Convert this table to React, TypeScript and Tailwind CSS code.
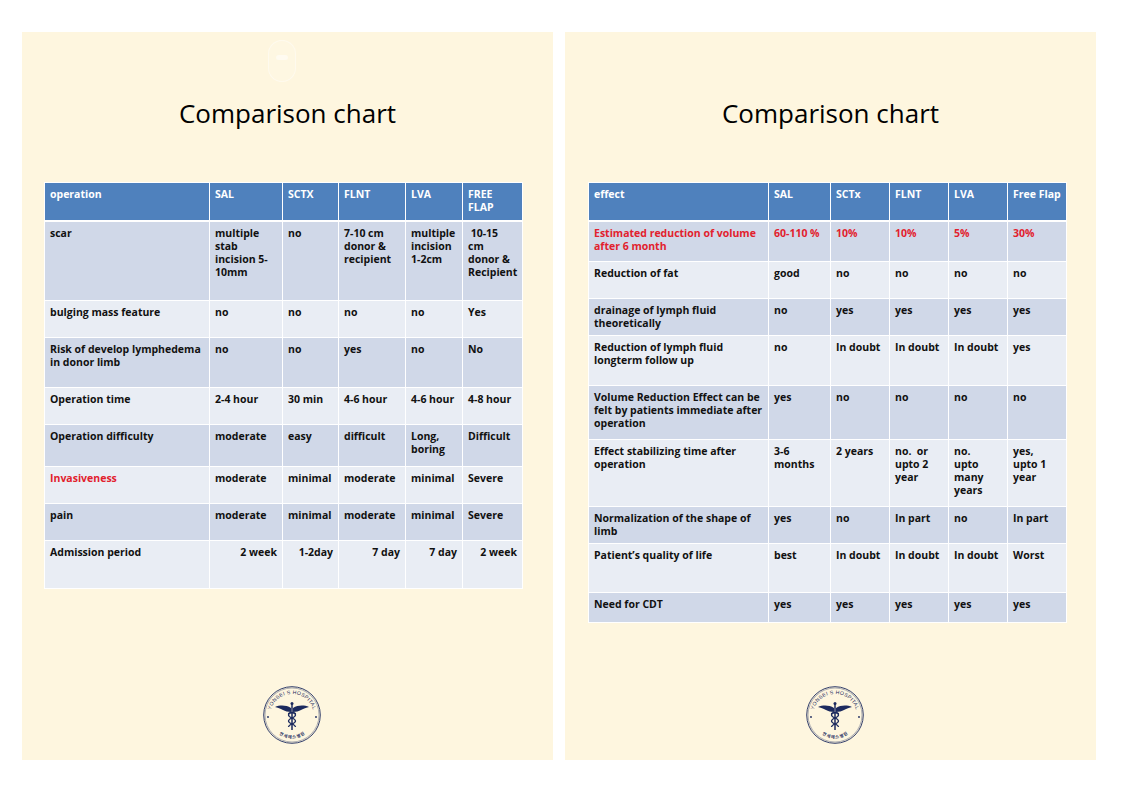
import React from "react";

type Cell = { t: string; red?: boolean; right?: boolean };
type Row = { h: number; cells: (string | Cell)[]; red?: boolean; rightVals?: boolean };

const FONT = { fontFamily: '"Open Sans", "Noto Sans CJK KR", sans-serif' };

const leftCols = [164, 72, 55, 66, 56, 59];
const rightCols = [179, 61, 58, 58, 58, 58];

const leftHeader = ["operation", "SAL", "SCTX", "FLNT", "LVA", "FREE\nFLAP"];
const leftRows: Row[] = [
  { h: 78, cells: ["scar", "multiple\nstab\nincision 5-\n10mm", "no", "7-10 cm\ndonor &\nrecipient", "multiple\nincision\n1-2cm", " 10-15\ncm\ndonor &\nRecipient"] },
  { h: 36, cells: ["bulging mass feature", "no", "no", "no", "no", "Yes"] },
  { h: 49, cells: ["Risk of develop lymphedema\nin donor limb", "no", "no", "yes", "no", "No"] },
  { h: 36, cells: ["Operation time", "2-4 hour", "30 min", "4-6 hour", "4-6 hour", "4-8 hour"] },
  { h: 41, cells: ["Operation difficulty", "moderate", "easy", "difficult", "Long,\nboring", "Difficult"] },
  { h: 36, cells: [{ t: "Invasiveness", red: true }, "moderate", "minimal", "moderate", "minimal", "Severe"] },
  { h: 36, cells: ["pain", "moderate", "minimal", "moderate", "minimal", "Severe"] },
  { h: 47, rightVals: true, cells: ["Admission period", "2 week", "1-2day", "7 day", "7 day", "2 week"] },
];

const rightHeader = ["effect", "SAL", "SCTx", "FLNT", "LVA", "Free Flap"];
const rightRows: Row[] = [
  { h: 39, red: true, cells: ["Estimated reduction of volume\nafter 6 month", "60-110 %", "10%", "10%", "5%", "30%"] },
  { h: 36, cells: ["Reduction of fat", "good", "no", "no", "no", "no"] },
  { h: 36, cells: ["drainage of lymph fluid\ntheoretically", "no", "yes", "yes", "yes", "yes"] },
  { h: 49, cells: ["Reduction of lymph fluid\nlongterm follow up", "no", "In doubt", "In doubt", "In doubt", "yes"] },
  { h: 53, cells: ["Volume Reduction Effect can be\nfelt by patients immediate after\noperation", "yes", "no", "no", "no", "no"] },
  { h: 66, cells: ["Effect stabilizing time after\noperation", "3-6\nmonths", "2 years", "no.  or\nupto 2\nyear", "no.\nupto\nmany\nyears", "yes,\nupto 1\nyear"] },
  { h: 36, cells: ["Normalization of the shape of\nlimb", "yes", "no", "In part", "no", "In part"] },
  { h: 48, cells: ["Patient\u2019s quality of life", "best", "In doubt", "In doubt", "In doubt", "Worst"] },
  { h: 29, cells: ["Need for CDT", "yes", "yes", "yes", "yes", "yes"] },
];

function Table({ cols, header, rows }: { cols: number[]; header: string[]; rows: Row[] }) {
  return (
    <div className="flex flex-col bg-white p-px" style={FONT}>
      <div className="flex gap-px h-[37px] mb-[2px]">
        {header.map((h, i) => (
          <div
            key={i}
            className="bg-[#4f81bd] text-white font-bold text-[10.5px] leading-[13px] pl-[5px] pt-[5px] whitespace-pre"
            style={{ width: cols[i] }}
          >
            {h}
          </div>
        ))}
      </div>
      <div className="flex flex-col gap-px">
        {rows.map((r, ri) => (
          <div key={ri} className="flex gap-px" style={{ height: r.h }}>
            {r.cells.map((c, ci) => {
              const cell: Cell = typeof c === "string" ? { t: c } : c;
              const red = cell.red || r.red;
              const right = r.rightVals && ci > 0;
              return (
                <div
                  key={ci}
                  className={
                    (ri % 2 === 0 ? "bg-[#d0d8e8] " : "bg-[#e9edf4] ") +
                    (red ? "text-[#e2212d] " : "text-[#111111] ") +
                    (right ? "text-right pr-[5px] " : "pl-[5px] ") +
                    "font-bold text-[10.5px] leading-[13px] pt-[5px] whitespace-pre overflow-hidden"
                  }
                  style={{ width: cols[ci] }}
                >
                  {cell.t}
                </div>
              );
            })}
          </div>
        ))}
      </div>
    </div>
  );
}

function Logo() {
  const navy = "#1c2a5e";
  return (
    <svg width="60" height="60" viewBox="0 0 60 60">
      <defs>
        <path id="topArc" d="M 8 31 A 22 22 0 0 1 52 31" />
        <path id="botArc" d="M 12.5 32 A 17.5 17.5 0 0 0 47.5 32" />
      </defs>
      <circle cx="30" cy="30" r="28.3" fill="none" stroke={navy} strokeWidth="0.9" />
      <circle cx="30" cy="30" r="27" fill="none" stroke={navy} strokeWidth="0.5" opacity="0.7" />
      <text fontSize="5.2" fill={navy} fontFamily='"Liberation Sans", sans-serif' letterSpacing="0.3">
        <textPath href="#topArc" startOffset="50%" textAnchor="middle">
          YONSEI S HOSPITAL
        </textPath>
      </text>
      <text fontSize="4.2" fill={navy} fontFamily='"Noto Sans CJK KR", sans-serif' fontWeight="bold">
        <textPath href="#botArc" startOffset="50%" textAnchor="middle" dominantBaseline="hanging">
          연세에스병원
        </textPath>
      </text>
      <circle cx="6" cy="32" r="0.9" fill={navy} />
      <circle cx="54" cy="32" r="0.9" fill={navy} />
      {/* caduceus */}
      <line x1="30" y1="19" x2="30" y2="45" stroke={navy} strokeWidth="1.5" />
      <circle cx="30" cy="18.5" r="1.5" fill={navy} />
      <path d="M29 23 C 24 20, 18 20, 13 22 C 17 23, 19 24, 21 25 C 23 26, 26 27, 29 27 Z" fill={navy} />
      <path d="M31 23 C 36 20, 42 20, 47 22 C 43 23, 41 24, 39 25 C 37 26, 34 27, 31 27 Z" fill={navy} />
      <path d="M26.5 29 C 26.5 27, 33.5 27, 33.5 30 C 33.5 33, 26.5 33, 26.5 36 C 26.5 39, 33.5 39, 33.5 42" fill="none" stroke={navy} strokeWidth="1.3" />
      <path d="M33.5 29 C 33.5 27, 26.5 27, 26.5 30 C 26.5 33, 33.5 33, 33.5 36 C 33.5 39, 26.5 39, 26.5 42" fill="none" stroke={navy} strokeWidth="1.3" />
    </svg>
  );
}

function Slide({ children, watermark }: { children: React.ReactNode; watermark?: boolean }) {
  return (
    <div className="relative w-[531px] h-[728px] bg-[#fef6df] flex flex-col">
      {watermark && (
        <div className="absolute left-[246px] top-[8px] w-[28px] h-[42px] rounded-full border border-white/40 bg-white/10 flex items-start justify-center pt-[14px]">
          <div className="w-[12px] h-[5px] bg-white/50 rounded-full" />
        </div>
      )}
      <div
        className="pt-[62px] h-[100px] text-center text-[26px] leading-[38px] text-black"
        style={FONT}
      >
        Comparison chart
      </div>
      {children}
      <div className="mt-auto mb-[15px] self-center ml-[9px]">
        <Logo />
      </div>
    </div>
  );
}

export default function App() {
  return (
    <div className="w-[1121px] h-[793px] bg-white flex gap-[12px] pl-[22px] pt-[32px]">
      <Slide watermark>
        <div className="mt-[50px] ml-[22px] self-start">
          <Table cols={leftCols} header={leftHeader} rows={leftRows} />
        </div>
      </Slide>
      <Slide>
        <div className="mt-[50px] ml-[23px] self-start">
          <Table cols={rightCols} header={rightHeader} rows={rightRows} />
        </div>
      </Slide>
    </div>
  );
}
